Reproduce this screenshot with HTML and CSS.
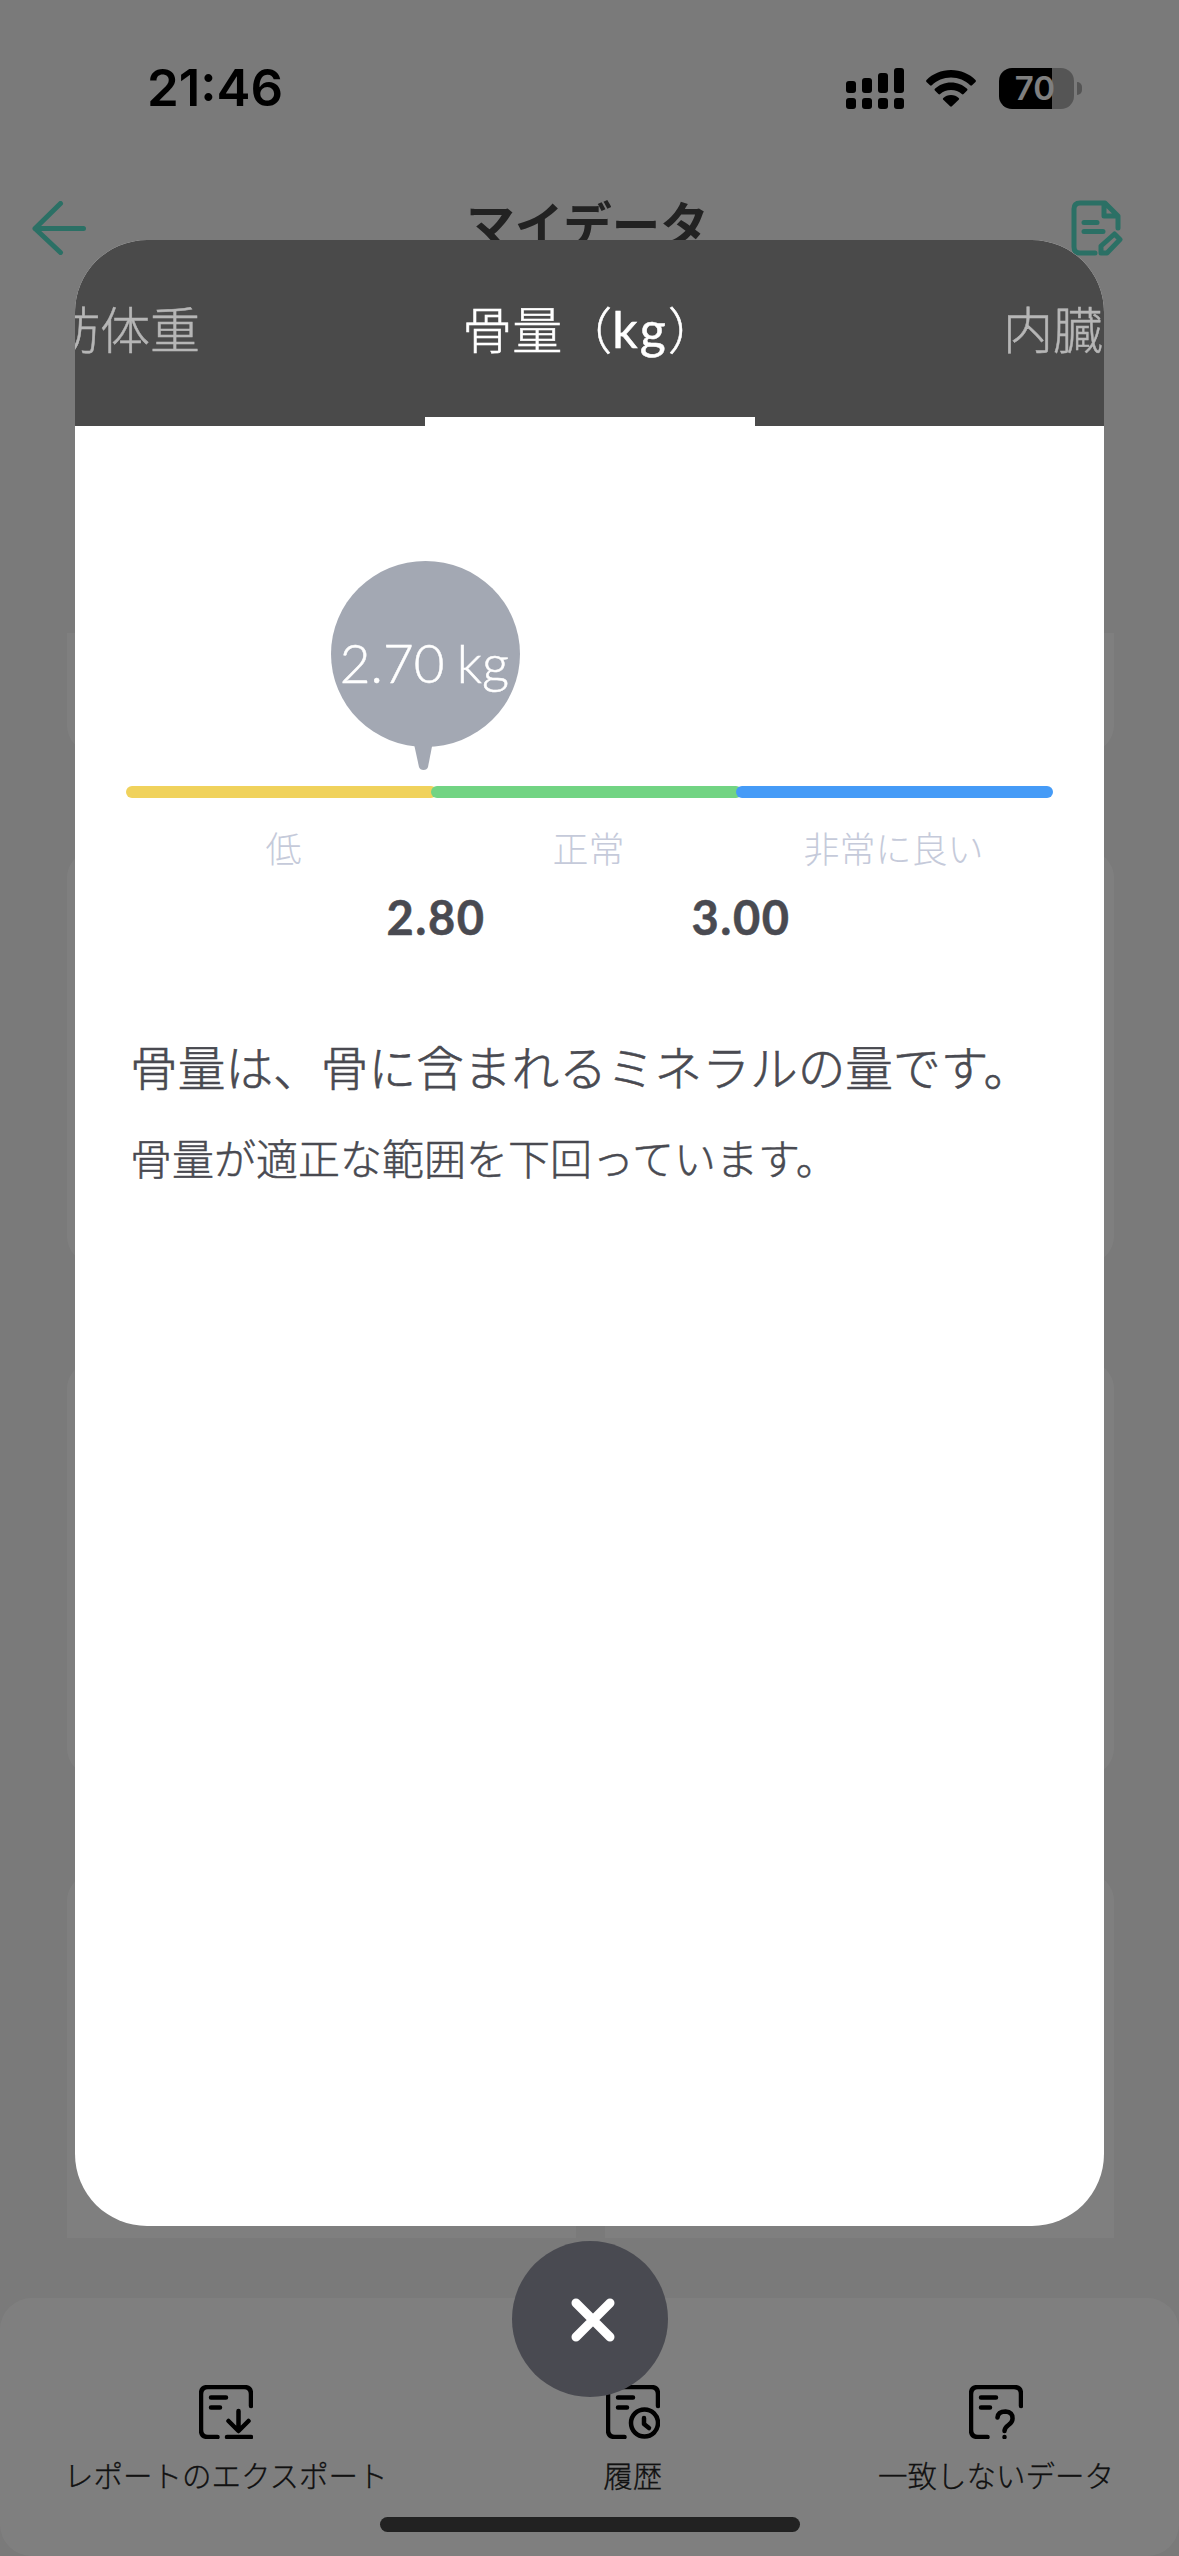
FILE: index.html
```html
<!DOCTYPE html>
<html lang="ja">
<head>
<meta charset="utf-8">
<title>マイデータ</title>
<link rel="stylesheet" href="styles.css">
</head>
<body>
<div class="screen">
  <div class="page">
    <header class="status">
      <span class="clock">21:46</span>
      <span class="status-icons">
        <svg class="signal" width="58" height="41" viewBox="0 0 58 41">
          <rect x="0" y="13" width="10" height="12" rx="3"/><rect x="16" y="10" width="10" height="15" rx="3"/><rect x="32" y="5" width="10" height="20" rx="3"/><rect x="48" y="0" width="10" height="25" rx="3"/>
          <rect x="0" y="30" width="10" height="11" rx="3"/><rect x="16" y="30" width="10" height="11" rx="3"/><rect x="32" y="30" width="10" height="11" rx="3"/><rect x="48" y="30" width="10" height="11" rx="3"/>
        </svg>
        <svg class="wifi" width="50" height="37" viewBox="0 0 50 37">
          <path d="M25 0C34.700 0 43.500 3.800 49.500 10.100Q50.300 11 49.500 11.900L46 15.300Q45.100 16.100 44.200 15.300C39.300 10.500 32.500 7.600 25 7.600S10.700 10.500 5.800 15.300Q4.900 16.100 4 15.300L.5 11.900Q-.3 11 .5 10.100C6.500 3.800 15.300 0 25 0Z"/>
          <path d="M25 12.500C31.300 12.500 37 14.900 41.100 18.800Q42 19.700 41.100 20.600L37.600 24Q36.700 24.800 35.800 24C33 21.500 29.200 20 25 20S17 21.500 14.200 24Q13.300 24.800 12.400 24L8.900 20.600Q8 19.700 8.900 18.800C13 14.900 18.700 12.500 25 12.500Z"/>
          <path d="M25 25C28 25 30.700 26.100 32.700 27.900Q33.600 28.800 32.700 29.700L25.900 36.300Q25 37.100 24.100 36.300L17.300 29.700Q16.400 28.800 17.300 27.900C19.300 26.100 22 25 25 25Z"/>
        </svg>
        <span class="battery"><span class="battery-body">70</span><span class="battery-tip"></span></span>
      </span>
    </header>
    <nav class="navbar">
      <svg class="back" width="54" height="54" viewBox="0 0 54 54"><path d="M28.500 2.500L3 27.500L28.500 51.500M3 27.500H51.500"/></svg>
      <h1>マイデータ</h1>
      <svg class="edit" width="52" height="56" viewBox="0 0 52 56"><path d="M24 53H9Q3 53 3 47V9Q3 3 9 3H34L47 16V28M33 4V16H46"/><path d="M13 22.500H26M13 31.500H32"/><path d="M30 53V46L43.500 34L49 39.500L36 53Z"/></svg>
    </nav>
    <main class="cards">
      <section class="card card-a"></section>
      <section class="card card-b"></section>
      <section class="card card-c"></section>
      <div class="card-pair"><section class="card"></section><section class="card"></section></div>
    </main>
    <footer class="toolbar">
      <div class="tool">
        <svg width="54" height="54" viewBox="0 0 54 54"><path d="M18.500 52H9Q2 52 2 45V9Q2 2 9 2H45Q52 2 52 9V21"/><path d="M12 12.500H27M12 22.500H21"/><path d="M39.500 26V45M29.500 36L39.500 46L49.500 36M28 52H52"/></svg>
        <span>レポートのエクスポート</span>
      </div>
      <div class="tool">
        <svg width="54" height="54" viewBox="0 0 54 54"><path d="M18.500 52H9Q2 52 2 45V9Q2 2 9 2H45Q52 2 52 9V21"/><path d="M12 12.500H27M12 22.500H21"/><circle cx="38.500" cy="38" r="13.500"/><path d="M38 33V39L43 43"/></svg>
        <span>履歴</span>
      </div>
      <div class="tool">
        <svg width="54" height="54" viewBox="0 0 54 54"><path d="M18.500 52H9Q2 52 2 45V9Q2 2 9 2H45Q52 2 52 9V21"/><path d="M12 12.500H27M12 22.500H21"/><path d="M28.500 32.500Q29 26.500 36.500 26.500Q44 27 43.500 34Q43.500 37 39.500 40Q35.500 43 35.500 46M35.500 52V52.100"/></svg>
        <span>一致しないデータ</span>
      </div>
    </footer>
  </div>

  <div class="overlay">
    <div class="dialog">
      <div class="tabs">
        <div class="tab tab-prev">除脂肪体重</div>
        <div class="tab tab-active">骨量（<span class="latin">kg</span>）</div>
        <div class="tab tab-next">内臓脂肪</div>
      </div>
      <div class="content">
        <div class="bubble">
          <svg width="189" height="210" viewBox="0 0 189 210"><ellipse cx="94.500" cy="93" rx="94.500" ry="93"/><path d="M83 183L88 206Q89 209 92.500 209T97 206L101.500 183Z"/></svg>
          <span>2.70 kg</span>
        </div>
        <div class="scale"><i class="low"></i><i class="normal"></i><i class="great"></i></div>
        <div class="labels"><span>低</span><span>正常</span><span>非常に良い</span></div>
        <div class="limits"><span>2.80</span><span>3.00</span></div>
        <p class="lead">骨量は、骨に含まれるミネラルの量です。</p>
        <p class="note">骨量が適正な範囲を下回っています。</p>
      </div>
    </div>
    <button class="close" aria-label="閉じる"><svg width="44" height="44" viewBox="0 0 44 44"><path d="M5 5L39 39M39 5L5 39"/></svg></button>
    <div class="home"></div>
  </div>
</div>
</body>
</html>
```
FILE: styles.css
```css
* { box-sizing: border-box; }
body { margin: 0; font-family: Lato, "Noto Sans CJK JP", sans-serif; }
h1, p { margin: 0; }
.screen { position: relative; width: 1179px; height: 2556px; overflow: hidden; }
.page { display: flex; flex-direction: column; height: 100%; background: #f4f4f4; }

.status { display: flex; justify-content: space-between; align-items: center; height: 176px; padding: 0 97px 0 147px; }
.clock { font: 600 51px/60px Inter, sans-serif; color: #000; }
.status-icons { display: flex; align-items: center; }
.wifi { margin: 0 23px 0 22px; }
.battery { display: flex; align-items: center; gap: 3px; }
.battery-body { width: 75px; height: 41px; padding-right: 3px; border-radius: 13px; background: linear-gradient(90deg, #000 53px, #aaa 53px); color: #fff; font: 600 33px/41px Inter, sans-serif; text-align: center; }
.battery-tip { width: 5px; height: 13px; border-radius: 0 6px 6px 0; background: #aaa; }

.navbar { display: flex; justify-content: space-between; align-items: center; height: 104px; padding: 0 56px 0 32px; }
.navbar svg { fill: none; stroke: #56e0ca; stroke-width: 5; stroke-linecap: round; stroke-linejoin: round; }
.navbar h1 { margin: 0 0 13px 18px; font: 700 48.500px/72px "Noto Sans CJK JP", sans-serif; color: #444; }

.cards { display: flex; flex-direction: column; flex: 1; gap: 97px; padding: 353px 65px 60px 67px; }
.card { background: #fff; border-radius: 28px; }
.card-a { height: 120px; border-radius: 0 0 28px 28px; }
.card-b { height: 414px; }
.card-c { height: 415px; }
.card-pair { display: grid; grid-template-columns: 1fr 1fr; gap: 29px; flex: 1; }
.card-pair .card { border-radius: 28px 28px 0 0; }

.toolbar { display: flex; justify-content: space-between; height: 258px; padding: 87px 65px 0 64px; background: #fff; border-radius: 32px; }
.tool { display: flex; flex-direction: column; align-items: center; gap: 14px; font: 300 29.5px/42px "Noto Sans CJK JP", sans-serif; color: #222; -webkit-text-stroke: .3px; }
.tool svg { fill: none; stroke: #000; stroke-width: 4.5; stroke-linecap: round; stroke-linejoin: round; }

.overlay { position: absolute; inset: 0; display: flex; flex-direction: column; align-items: center; padding-top: 240px; background: rgba(0, 0, 0, .5); }
.dialog { width: 1029px; height: 1986px; border-radius: 72px; overflow: hidden; background: #fff; }
.tabs { display: flex; height: 186px; background: #4a4a4a; color: #b6b6b6; font: 300 50px/72px "Noto Sans CJK JP", sans-serif; -webkit-text-stroke: .5px; white-space: nowrap; }
.tab { display: flex; flex: 0 0 350px; min-width: 0; padding-top: 51px; }
.tab-prev { justify-content: flex-end; padding-right: 225px; }
.tab-active { flex-basis: 330px; justify-content: center; border-bottom: 9px solid #fff; color: #fff; }
.tab-next { padding-left: 248px; }
.latin { padding-top: 2px; font-family: Lato, sans-serif; font-weight: 400; letter-spacing: 2px; }

.content { padding: 135px 51px 0; color: #494a51; }
.bubble { position: relative; width: 189px; height: 210px; margin-left: 205px; }
.bubble svg { display: block; fill: #a3a8b3; }
.bubble span { position: absolute; left: 0; right: 2px; top: 70px; text-align: center; color: #fff; font: 300 53px/64px Lato, sans-serif; -webkit-text-stroke: .5px; word-spacing: -2px; white-space: nowrap; }
.scale { display: flex; height: 12px; margin-top: 15px; }
.scale i { border-radius: 6px; }
.scale .low, .scale .normal { flex: 0 0 311px; margin-right: -6px; }
.low { background: #f0d25c; }
.normal { background: #72d483; }
.great { flex: 1; background: #459bf7; }
.labels { display: grid; grid-template-columns: repeat(3, 1fr); margin-top: 22px; padding: 0 7px 0 5px; color: #c5cada; font: 300 36px/54px "Noto Sans CJK JP", sans-serif; text-align: center; }
.limits { display: flex; justify-content: center; gap: 205px; margin: 15px 2px 0 0; font: 700 47px/56px Lato, sans-serif; letter-spacing: 1.5px; -webkit-text-stroke: .5px; }
.limits span { width: 100px; text-align: center; }
.lead { margin: 85px 0 0 4px; font: 300 47.700px/72px "Noto Sans CJK JP", sans-serif; -webkit-text-stroke: .6px; }
.note { margin: 23px 0 0 4px; font: 300 42px/64px "Noto Sans CJK JP", sans-serif; -webkit-text-stroke: .5px; }

.close { display: grid; place-items: center; width: 156px; height: 156px; margin-top: 15px; padding: 2px 0 0 6px; border: 0; border-radius: 50%; background: #494a51; }
.close svg { fill: none; stroke: #fff; stroke-width: 9; stroke-linecap: round; }
.home { width: 420px; height: 15px; margin-top: 120px; border-radius: 8px; background: #222; }
```
